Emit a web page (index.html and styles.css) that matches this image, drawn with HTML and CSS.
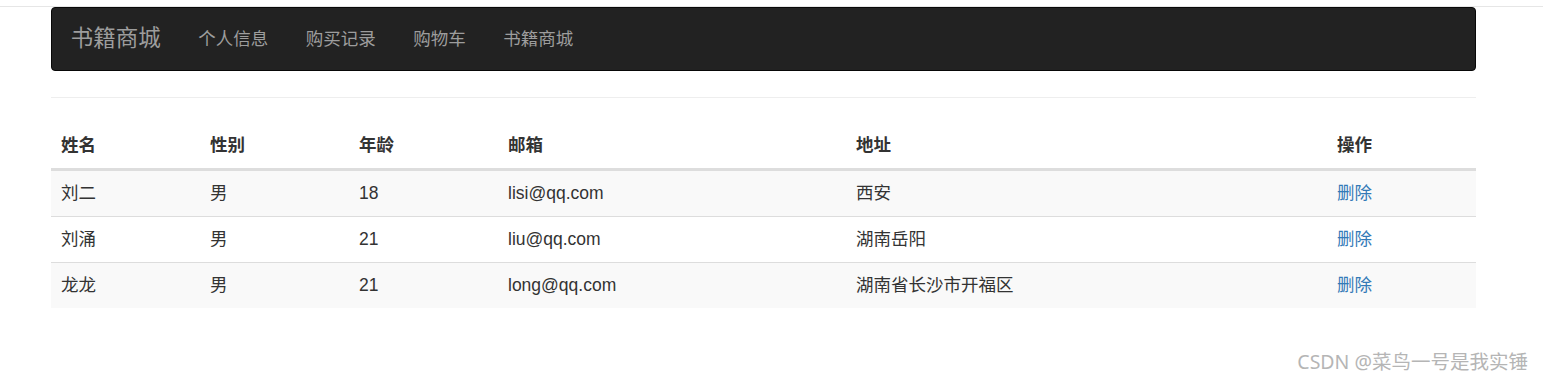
FILE: index.html
```html
<!DOCTYPE html>
<html lang="zh-CN">
<head>
    <meta charset="UTF-8">
    <meta name="viewport" content="width=device-width, initial-scale=1.0">
    <title>书籍商城</title>
    <link rel="stylesheet" href="styles.css">
</head>
<body>
    <div class="topline"></div>
    <div class="container">
        <nav class="navbar">
            <a class="brand" href="#">书籍商城</a>
            <ul class="nav">
                <li><a href="#">个人信息</a></li>
                <li><a href="#">购买记录</a></li>
                <li><a href="#">购物车</a></li>
                <li><a href="#">书籍商城</a></li>
            </ul>
        </nav>
        <hr>
        <table class="table">
            <thead>
                <tr>
                    <th class="c-name">姓名</th>
                    <th class="c-sex">性别</th>
                    <th class="c-age">年龄</th>
                    <th class="c-mail">邮箱</th>
                    <th class="c-addr">地址</th>
                    <th>操作</th>
                </tr>
            </thead>
            <tbody>
                <tr>
                    <td>刘二</td>
                    <td>男</td>
                    <td>18</td>
                    <td>lisi@qq.com</td>
                    <td>西安</td>
                    <td><a href="#">删除</a></td>
                </tr>
                <tr>
                    <td>刘涌</td>
                    <td>男</td>
                    <td>21</td>
                    <td>liu@qq.com</td>
                    <td>湖南岳阳</td>
                    <td><a href="#">删除</a></td>
                </tr>
                <tr>
                    <td>龙龙</td>
                    <td>男</td>
                    <td>21</td>
                    <td>long@qq.com</td>
                    <td>湖南省长沙市开福区</td>
                    <td><a href="#">删除</a></td>
                </tr>
            </tbody>
        </table>
    </div>
    <div class="watermark">CSDN @菜鸟一号是我实锤</div>
</body>
</html>
```

FILE: styles.css
```css
body {
    margin: 0;
    font-family: "Liberation Sans", "Noto Sans CJK SC", sans-serif;
    font-size: 17.5px;
    color: #333;
    background: #fff;
}
a {
    text-decoration: none;
}
.topline {
    height: 6px;
    border-bottom: 1px solid #e6e6e6;
}
.container {
    width: 1425px;
    margin-left: 51px;
}
.navbar {
    height: 64px;
    background: #222;
    border: 1px solid #080808;
    border-radius: 4px;
    display: flex;
    align-items: center;
    box-sizing: border-box;
}
.brand {
    color: #9d9d9d;
    font-size: 22.5px;
    padding: 0 18.75px;
    line-height: 62px;
}
.nav {
    list-style: none;
    margin: 0;
    padding: 0;
    display: flex;
}
.nav a {
    display: block;
    color: #9d9d9d;
    padding: 0 18.75px;
    line-height: 62px;
}
hr {
    margin: 26px 0 0;
    border: 0;
    border-top: 1px solid #eee;
}
.table {
    width: 100%;
    margin-top: 25px;
    border-collapse: collapse;
    border-spacing: 0;
}
.table th,
.table td {
    text-align: left;
    padding: 10px;
    line-height: 25px;
    vertical-align: top;
}
.table th {
    font-weight: bold;
    border-bottom: 3px solid #ddd;
}
.table td {
    border-top: 1px solid #ddd;
}
.table tbody tr:first-child td {
    border-top: 0;
}
.table tbody tr:nth-child(odd) {
    background: #f9f9f9;
}
.table td a {
    color: #337ab7;
}
.c-name, .c-sex, .c-age {
    width: 129px;
}
.c-mail {
    width: 328px;
}
.c-addr {
    width: 461px;
}
.watermark {
    position: absolute;
    right: 15px;
    top: 346px;
    font-size: 19.5px;
    color: #b5b5b5;
    font-family: "Noto Sans", "Noto Sans CJK SC", sans-serif;
}
```
